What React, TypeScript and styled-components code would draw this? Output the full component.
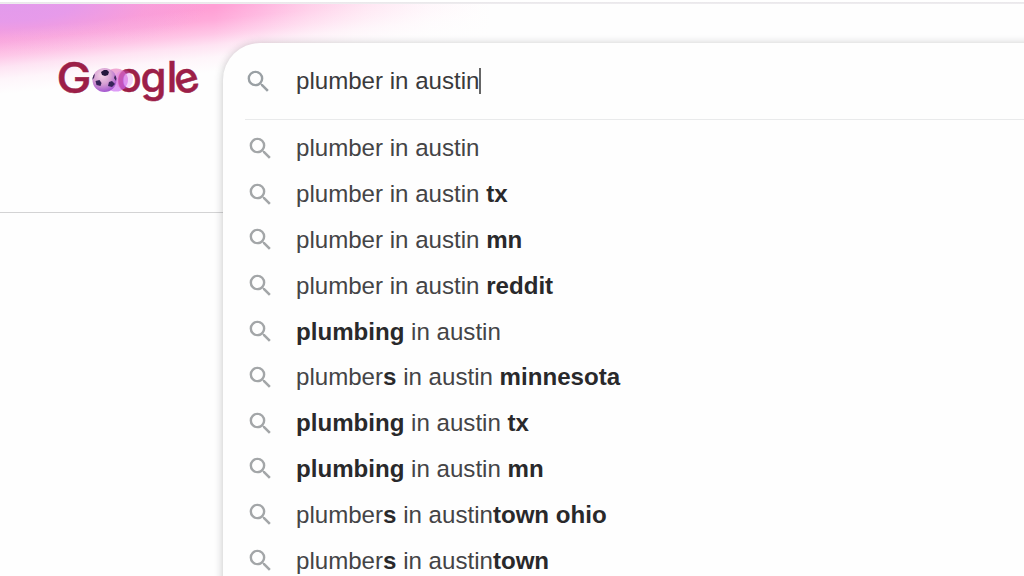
import React from "react";
import styled, { createGlobalStyle } from "styled-components";

const GlobalStyle = createGlobalStyle`
  * { box-sizing: border-box; }
  body { margin: 0; background: #fff; overflow: hidden; font-family: "Liberation Sans", Arial, sans-serif; }
`;

const Page = styled.div`
  width: 1024px;
  height: 576px;
  overflow: hidden;
  display: flex;
  flex-direction: column;
  background: #fefefe;
`;

const TopEdge = styled.div`
  flex: none;
  height: 4px;
  background: linear-gradient(#fff 0, #fff 2px, #e9e7ea 2px, #efedf0 4px);
`;

const Columns = styled.div`
  flex: 1;
  min-height: 0;
  display: flex;
  align-items: flex-start;
  background-color: #fefefe;
  background-image:
    linear-gradient(174deg, rgba(254, 254, 254, 0) 26px, rgba(254, 254, 254, 0.12) 38px, rgba(254, 254, 254, 0.42) 52px, rgba(254, 254, 254, 0.72) 63px, rgba(254, 254, 254, 0.91) 75px, #fefefe 90px),
    radial-gradient(ellipse 210px 50px at 0 0, rgba(226, 154, 236, 1) 0%, rgba(228, 154, 236, 0.9) 35%, rgba(240, 156, 224, 0.4) 70%, rgba(255, 158, 214, 0) 100%),
    linear-gradient(90deg, #fda0d8 0, #ff9fd5 215px, #ffb2de 260px, #ffcce8 310px, #ffe2f1 365px, #fff4fa 430px, #fefefe 490px);
  background-size: 520px 100px;
  background-repeat: no-repeat;
`;

const Header = styled.header`
  flex: none;
  width: 223px;
  height: 209px;
  padding: 46px 0 0 54px;
  border-bottom: 1.5px solid #d3d3d4;
`;

const Logo = styled.svg`
  display: block;
  overflow: visible;
`;

const Panel = styled.main`
  flex: 1;
  height: 600px;
  margin: 39px -60px 0 0;
  padding-left: 22px;
  border-radius: 37px 0 0 0;
  background: #fefefe;
  box-shadow: 0 1px 9px rgba(32, 33, 36, 0.27);
`;

const SearchField = styled.div`
  display: flex;
  align-items: center;
  height: 77px;
  border-bottom: 1.5px solid #e9eaeb;
  font-size: 24.1px;
  line-height: 28px;
  color: #3a3a3c;
`;

const FieldIcon = styled.svg`
  flex: none;
  width: 29px;
  height: 29px;
  margin: 0 23px 0 -1px;
  fill: #9aa0a4;
`;

const RowIcon = styled(FieldIcon)`
  margin: 0 21px 0 1px;
  fill: #a3a6a8;
`;

const Query = styled.span`
  white-space: pre;
  margin-top: -1px;
`;

const Caret = styled.span`
  width: 1.5px;
  height: 26px;
  background: #666;
`;

const Suggestions = styled.ul`
  list-style: none;
  margin: 0;
  padding: 5.5px 0 0;
`;

const Suggestion = styled.li`
  display: flex;
  align-items: center;
  height: 45.8px;
  font-size: 24.1px;
  line-height: 28px;
  color: #444446;
  white-space: pre;

  b { color: #29292b; }
`;

const searchPath =
  "M15.5 14h-.79l-.28-.27A6.471 6.471 0 0 0 16 9.5 6.5 6.5 0 1 0 9.5 16c1.61 0 3.09-.59 4.23-1.57l.27.28v.79l5 4.99L20.49 19l-4.99-5zm-6 0C7.01 14 5 11.99 5 9.5S7.01 5 9.5 5 14 7.01 14 9.5 11.99 14 9.5 14z";

const suggestions: React.ReactNode[] = [
  <>plumber in austin</>,
  <>plumber in austin <b>tx</b></>,
  <>plumber in austin <b>mn</b></>,
  <>plumber in austin <b>reddit</b></>,
  <><b>plumbing</b> in austin</>,
  <>plumber<b>s</b> in austin <b>minnesota</b></>,
  <><b>plumbing</b> in austin <b>tx</b></>,
  <><b>plumbing</b> in austin <b>mn</b></>,
  <>plumber<b>s</b> in austin<b>town ohio</b></>,
  <>plumber<b>s</b> in austin<b>town</b></>,
];

function GoogleLogo() {
  return (
    <Logo width="150" height="60" viewBox="54 50 150 60" aria-label="Google">
      <defs>
        <radialGradient id="ball" cx="0.4" cy="0.3" r="0.75">
          <stop offset="0" stopColor="#f3d3e6" />
          <stop offset="0.5" stopColor="#d69fd3" />
          <stop offset="1" stopColor="#9d4ccf" />
        </radialGradient>
        <linearGradient id="trail" x1="0" y1="0" x2="0.3" y2="1">
          <stop offset="0" stopColor="#ec78ad" />
          <stop offset="1" stopColor="#c75af2" />
        </linearGradient>
        <clipPath id="ballClip"><circle cx="104.5" cy="80" r="12" /></clipPath>
      </defs>
      <g fill="#9c1f48" stroke="#9c1f48" strokeWidth="0.5" fontFamily="Inter, sans-serif" fontWeight="500" fontSize="42">
        <text x="56.5" y="92.5" textLength="35" lengthAdjust="spacingAndGlyphs">G</text>
        <text x="116.5" y="92.2">o</text>
        <text x="140.5" y="92.2">g</text>
        <text x="166.7" y="92.2">l</text>
        <text x="174.5" y="92.2" transform="rotate(-16 187 81)">e</text>
      </g>
      <ellipse cx="116" cy="80" rx="12" ry="11.5" fill="url(#trail)" opacity="0.6" />
      <ellipse cx="124" cy="79.5" rx="9" ry="9.5" fill="#d66cf0" opacity="0.3" />
      <circle cx="104.5" cy="80" r="12" fill="url(#ball)" />
      <g clipPath="url(#ballClip)">
        <path d="M101 72l3-2h3l2 2-1 3-3 1-3-1z" fill="#25183d" />
        <path d="M95.5 81l4-1 2 3-1 3-4-1z" fill="#352359" />
        <path d="M109 82l3-1 3 3-3 3-4-1z" fill="#352359" />
        <path d="M92 76l3-2-1 4-2 2zM115 75l2 3-1 3-2-3z" fill="#3d2859" />
      </g>
    </Logo>
  );
}

export default function App() {
  return (
    <>
      <GlobalStyle />
      <Page>
        <TopEdge />
        <Columns>
          <Header><GoogleLogo /></Header>
          <Panel>
            <SearchField>
              <FieldIcon viewBox="0 0 24 24"><path d={searchPath} /></FieldIcon>
              <Query>plumber in austin</Query>
              <Caret />
            </SearchField>
            <Suggestions>
              {suggestions.map((text, i) => (
                <Suggestion key={i}>
                  <RowIcon viewBox="0 0 24 24"><path d={searchPath} /></RowIcon>
                  <span>{text}</span>
                </Suggestion>
              ))}
            </Suggestions>
          </Panel>
        </Columns>
      </Page>
    </>
  );
}
